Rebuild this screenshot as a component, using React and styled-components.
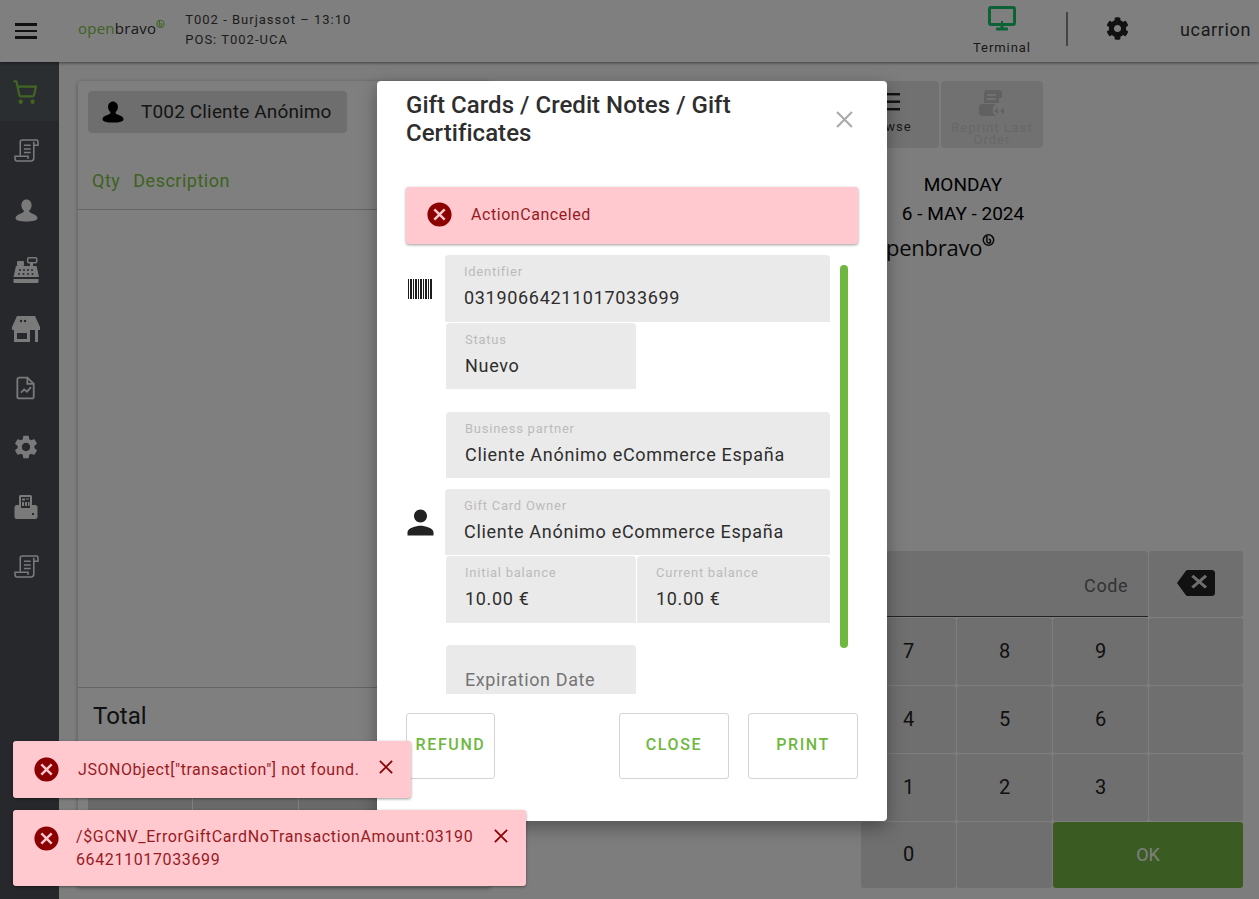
import React from 'react';
import styled, { createGlobalStyle } from 'styled-components';
import { FaCog } from 'react-icons/fa';
import { ShoppingCart } from 'lucide-react';

const Global = createGlobalStyle`
  html, body { margin: 0; padding: 0; height: 100%; overflow: hidden; }
  body { font-family: Roboto, "Liberation Sans", sans-serif; color: #222; }
  * { box-sizing: border-box; }
`;

const Page = styled.div`
  width: 1259px; height: 899px; position: relative; overflow: hidden;
  background: #fafafa; display: flex; flex-direction: column;
`;
const TopBar = styled.header`
  height: 62px; flex: none; background: #fff; display: flex; align-items: center;
  box-shadow: 0 1px 3px rgba(0,0,0,.5); position: relative; z-index: 1;
`;
const Burger = styled.div`
  width: 22px; margin-left: 15px; margin-right: 41px; display: flex; flex-direction: column; gap: 4px;
  span { display: block; height: 2.4px; background: #222; }
`;
const LogoBox = styled.div`
  display: inline-flex; align-items: flex-start; font-family: "Open Sans", sans-serif;
  font-size: ${p => p.$size}px; line-height: 1; letter-spacing: ${p => p.$track}px; font-weight: 400;
  margin-top: ${p => p.$top || 0}px;
  svg { margin-top: ${p => p.$ring}px; }
`;
const LogoPart = styled.span`color: ${p => p.$color};`;
const StoreInfo = styled.div`
  margin-left: 20px; margin-top: -2px; font-size: 13px; line-height: 20px; letter-spacing: 1px; color: #3a3a3a;
`;
const TopRight = styled.div`
  margin-left: auto; display: flex; align-items: center; height: 100%;
`;
const Terminal = styled.div`
  width: 66px; display: flex; flex-direction: column; align-items: center; font-size: 13px;
  letter-spacing: .95px; color: #333; margin-top: 3px; line-height: 16px; margin-left: -1px;
  svg { margin-bottom: 9px; margin-top: -4px; }
`;
const Divider = styled.div`
  width: 2px; height: 34px; background: #888; margin: 0 37px 0 31px; margin-top: -4px;
`;
const UserName = styled.div`
  font-size: 18px; letter-spacing: .65px; color: #333; margin-left: 51px; margin-right: 8px; margin-top: -4px; width: 71px; white-space: nowrap;
`;
const GearBtn = styled.div`display: flex; margin-top: -6px; margin-left: 1px; color: #222;`;

const Body = styled.div`flex: 1; display: flex; min-height: 0;`;
const Sidebar = styled.nav`
  width: 59px; flex: none; background: #4c5158; display: flex; flex-direction: column;
`;
const NavItem = styled.div`
  height: 59.3px; display: flex; align-items: center; justify-content: center; padding-right: ${p => (p.$active ? 9 : 7)}px;
  background: ${p => (p.$active ? '#575c63' : 'transparent')};
  color: ${p => (p.$active ? '#85cc45' : '#f5f5f5')};
`;
const Main = styled.main`
  flex: 1; display: flex; padding: 19px 16px 12px 19px; min-width: 0;
`;
const OrderPanel = styled.section`
  width: 412px; flex: none; background: #fff; border-radius: 3px; display: flex; flex-direction: column;
  box-shadow: 0 1px 4px rgba(0,0,0,.35);
`;
const Customer = styled.div`
  margin: 10px 0 0 10px; width: 259px; height: 42px; background: #dcdcdc; border-radius: 4px;
  display: flex; align-items: center; padding: 0 0 1px 13px; gap: 16px; font-size: 19px; letter-spacing: .15px; color: #2a2a2a;
`;
const OrderHead = styled.div`
  height: 77px; flex: none; border-bottom: 1px solid #c8c8c8; display: flex; align-items: flex-end; gap: 13px;
  padding: 0 0 18px 14px; font-size: 18px; color: #7cc544; letter-spacing: .5px;
`;
const OrderLines = styled.div`flex: 1;`;
const TotalRow = styled.div`
  height: 108px; flex: none; border-top: 1px solid #c8c8c8; padding: 14px 15px; font-size: 24px; color: #222;
`;
const OrderKeys = styled.div`
  display: grid; grid-template-columns: 104px 105px 105px 1fr; gap: 1px; padding: 0 10px; height: 90px; margin-bottom: 2px; flex: none;
`;
const OrderKey = styled.div`background: #d2d2d2;`;

const Side = styled.section`flex: 1; display: flex; flex-direction: column; min-width: 0;`;
const Toolbar = styled.div`display: flex; justify-content: flex-end; gap: 2px; margin-right: 200px;`;
const ToolBtn = styled.div`
  width: ${p => p.$w}px; height: 67px; background: #e3e3e3; border-radius: 4px; display: flex;
  flex-direction: column; align-items: center; font-size: 13px; letter-spacing: 1px; text-align: center;
  line-height: 12px; padding-top: ${p => p.$pad}px;
  color: ${p => (p.$off ? '#cfcfcf' : '#333')};
  svg { margin-bottom: ${p => p.$gap}px; }
`;
const DateBlock = styled.div`
  margin: 22px 0 0 371px; width: 204px; text-align: center; font-size: 19px; line-height: 29px; color: #000;
`;
const InfoLogo = styled.div`margin: 0 0 0 383px;`;
const Keypad = styled.div`
  margin-top: auto; align-self: flex-end; width: 382px; height: 336px; display: grid;
  grid-template-columns: 95px 95px 95px 94px; grid-template-rows: 66px 67px 67px 67px 66px; gap: 1px;
`;
const CodeCell = styled.div`
  grid-column: span 3; background: #dfdfdf; border-bottom: 1px solid #444; border-radius: 4px 4px 0 0;
  display: flex; align-items: center; justify-content: flex-end; padding: 3px 20px 0 0; font-size: 18px; color: #666; letter-spacing: .55px;
`;
const Key = styled.div`
  grid-column: span ${p => p.$span || 1}; background: ${p => (p.$ok ? '#74b844' : '#dfdfdf')};
  border-radius: 3px; display: flex; align-items: center; justify-content: center; font-size: 20px;
  color: ${p => (p.$ok ? '#fff' : '#222')}; padding-bottom: 2px;
  ${p => p.$ok && 'font-size: 18px;'}
`;
const Overlay = styled.div`position: absolute; inset: 0; background: rgba(0,0,0,.5); z-index: 2;`;

const Modal = styled.div`
  position: absolute; left: 377px; top: 81px; width: 510px; height: 740px; z-index: 3; background: #fff;
  border-radius: 4px; padding: 10px 29px 0; display: flex; flex-direction: column;
  box-shadow: 0 6px 18px rgba(0,0,0,.35);
`;
const ModalHead = styled.div`display: flex; align-items: center; justify-content: space-between;`;
const ModalTitle = styled.h2`
  margin: 0; width: 350px; font-size: 24px; line-height: 28px; font-weight: 500; color: #2e2e2e; letter-spacing: .04px;
`;
const ModalClose = styled.div`display: flex; margin-right: 5px; color: #aaa;`;
const AlertBox = styled.div`
  margin-top: 40px; height: 57px; flex: none; background: #ffc9cf; border-radius: 3px;
  display: flex; align-items: center; padding: 0 0 2px 21px; gap: 20px; font-size: 16px; color: #981a1f; letter-spacing: .55px;
  box-shadow: 0 1px 3px rgba(0,0,0,.4);
`;
const FormScroll = styled.div`
  margin-top: 11px; height: 439px; flex: none; overflow: hidden; position: relative;
`;
const Scrollbar = styled.div`
  position: absolute; right: 10px; top: 10px; width: 8px; height: 383px; border-radius: 4px; background: #6fb83f;
`;
const FieldRow = styled.div`
  width: 424px; display: flex; align-items: center; margin-top: ${p => p.$mt || 0}px;
`;
const RowIcon = styled.div`width: 39px; flex: none; display: flex; color: #222; padding-left: 2px;`;
const FieldPair = styled.div`
  flex: 1; display: flex; gap: 1px; margin-left: ${p => (p.$inset ? 1 : 0)}px;
`;
const Field = styled.div`
  width: ${p => (p.$w ? `${p.$w}px` : 'auto')}; flex: ${p => (p.$w ? 'none' : 1)}; height: ${p => p.$h || 66}px;
  background: #eaeaea; border-radius: 4px 4px 0 0; padding: 9px 19px 0;
`;
const FieldLabel = styled.div`font-size: 13px; line-height: 16px; color: #bbb; letter-spacing: .75px;`;
const FieldValue = styled.div`
  font-size: 18px; line-height: 24px; margin-top: 6px; color: #2e2e2e; white-space: nowrap; letter-spacing: .69px;
`;
const FieldHint = styled.div`font-size: 18px; line-height: 24px; margin-top: 14px; color: #757575; letter-spacing: .6px;`;
const ModalFoot = styled.div`margin-top: 19px; display: flex; gap: 19px;`;
const FootBtn = styled.div`
  width: ${p => p.$w}px; height: 66px; margin-right: ${p => p.$mr || 0}px; border: 1px solid #d4d4d4; border-radius: 3px;
  display: flex; align-items: center; justify-content: center; font-size: 16px; font-weight: 500;
  letter-spacing: 1.6px; color: #6fb83f; padding-bottom: 4px;
`;
const ToastStack = styled.div`
  position: absolute; left: 13px; bottom: 13px; z-index: 4; display: flex; flex-direction: column; align-items: flex-start; gap: 12px;
`;
const Toast = styled.div`
  width: ${p => p.$w}px; min-height: 57px; background: #ffc9cf; border-radius: 3px; display: flex; align-items: flex-start;
  font-size: 16px; line-height: 23px; color: #981a1f; letter-spacing: ${p => p.$track}px; padding: ${p => p.$pad}px 0 0 21px;
  box-shadow: 0 1px 3px rgba(0,0,0,.4); position: relative;
`;
const ToastIcon = styled.div`display: flex; flex: none; margin-right: ${p => p.$gap}px; margin-top: ${p => p.$top}px;`;
const ToastText = styled.div`width: ${p => p.$w}px; word-break: break-all; padding-bottom: 15px;`;
const ToastClose = styled.div`display: flex; position: absolute; color: #8b0000; right: ${p => p.$r}px; top: ${p => p.$t}px;`;

const CANCEL = 'M12 2C6.47 2 2 6.47 2 12s4.47 10 10 10 10-4.47 10-10S17.53 2 12 2zm5 13.59L15.59 17 12 13.41 8.41 17 7 15.59 10.59 12 7 8.41 8.41 7 12 10.59 15.59 7 17 8.41 13.41 12 17 15.59z';
const ErrorIcon = () => (
  <svg width="29" height="29" viewBox="0 0 24 24" style={{ margin: '-2.5px' }}><path fill="#8b0000" d={CANCEL} /></svg>
);
const CloseX = ({ size, color = 'currentColor', w = 2 }) => (
  <svg width={size} height={size} viewBox="0 0 16 16"><path d="M1 1l14 14M15 1L1 15" stroke={color} strokeWidth={w} fill="none" /></svg>
);
const Bust = ({ size, color }) => (
  <svg width={size} height={size} viewBox="0 0 24 24" fill={color}>
    <path d="M12 1.500c2.800 0 4.900 2.300 4.900 5.400 0 2.100-.9 3.900-2.300 5V13c0 .9 1.200 1.300 3.100 2 2.400.9 4.800 1.900 4.800 4.400 0 2.100-4.800 3.100-10.500 3.100S1.500 21.500 1.500 19.400c0-2.500 2.400-3.500 4.800-4.400 1.900-.7 3.100-1.100 3.100-2v-1.100c-1.400-1.100-2.300-2.900-2.300-5 0-3.100 2.100-5.400 4.900-5.400z" />
  </svg>
);
const Scroll = ({ size = 25, color = 'currentColor' }) => (
  <svg width={size} height={size} viewBox="0 0 24 24" fill="none" stroke={color} strokeWidth="1.500">
    <path d="M6 17V4a2 2 0 0 1 2-2h13.500a1.500 1.500 0 0 1 1.500 1.500V7h-4" />
    <path d="M19 3.500V19.500a2.500 2.500 0 0 1-2.500 2.500H3a2 2 0 0 1-2-2v-2.500h12.500v2.500" />
    <path d="M9.500 7h6.500M9.500 10.500h6.500M9.500 14h6.500" />
  </svg>
);
const Register = () => (
  <svg width="28" height="28" viewBox="0 0 28 28" fill="currentColor">
    <rect x="15.700" y="1.700" width="9" height="5" rx="1" fill="none" stroke="currentColor" strokeWidth="1.500" />
    <rect x="18" y="6" width="3" height="4" />
    <rect x="5" y="5" width="7" height="5" rx="1" />
    <path d="M4 10h20.500l2.500 11H1.500z" />
    <g fill="#4c5158"><circle cx="8" cy="14" r="1" /><circle cx="12" cy="14" r="1" /><circle cx="16" cy="14" r="1" /><circle cx="20" cy="14" r="1" /><circle cx="7" cy="18" r="1" /><circle cx="11.500" cy="18" r="1" /><circle cx="16" cy="18" r="1" /><circle cx="20.500" cy="18" r="1" /></g>
    <path d="M1.500 23h25v3a1 1 0 0 1-1 1h-23a1 1 0 0 1-1-1z" />
  </svg>
);
const Store = () => (
  <svg width="28" height="26" viewBox="0 0 28 26" fill="currentColor">
    <path d="M5 0h18l5 11v3H0v-3z" />
    <circle cx="9" cy="5" r="1.200" fill="#4c5158" /><circle cx="13" cy="5" r="1.200" fill="#4c5158" />
    <path fillRule="evenodd" d="M2 14h16v12H2zM5 17v6h10v-6z" />
    <rect x="23" y="14" width="3" height="12" />
  </svg>
);
const DocChart = () => (
  <svg width="20" height="24" viewBox="0 0 22 26" fill="none" stroke="currentColor" strokeWidth="2">
    <path d="M3.500 1.500h9l7 7v14a2 2 0 0 1-2 2h-14a2 2 0 0 1-2-2v-19a2 2 0 0 1 2-2z" />
    <path d="M12.500 1.500v7h7" />
    <path d="M5.500 18l3.500-3.500 3 2.500 4.500-5" strokeWidth="2" />
  </svg>
);
const Gear = () => (
  <svg width="28" height="28" viewBox="0 0 24 24" fill="currentColor">
    <path d="M19.140,12.940c0.040-0.300,0.060-0.610,0.060-0.940c0-0.320-0.020-0.640-0.070-0.940l2.030-1.580c0.180-0.140,0.230-0.410,0.120-0.610l-1.920-3.320c-0.120-0.220-0.370-0.290-0.590-0.220l-2.390,0.960c-0.500-0.380-1.030-0.700-1.620-0.940L14.400,2.810c-0.040-0.240-0.240-0.410-0.480-0.410h-3.840c-0.240,0-0.430,0.170-0.470,0.410L9.250,5.350C8.660,5.590,8.120,5.920,7.630,6.290L5.240,5.330c-0.220-0.080-0.470,0-0.590,0.220L2.740,8.870C2.620,9.080,2.660,9.340,2.860,9.480l2.030,1.580C4.840,11.360,4.800,11.690,4.800,12s0.020,0.640,0.070,0.940l-2.030,1.580c-0.180,0.140-0.230,0.410-0.120,0.610l1.920,3.320c0.120,0.220,0.370,0.290,0.590,0.220l2.390-0.960c0.500,0.380,1.030,0.700,1.620,0.940l0.360,2.540c0.050,0.240,0.240,0.410,0.480,0.410h3.840c0.240,0,0.440-0.170,0.470-0.410l0.360-2.540c0.590-0.240,1.130-0.560,1.620-0.940l2.390,0.960c0.220,0.080,0.470,0,0.590-0.220l1.920-3.320c0.120-0.220,0.070-0.470-0.120-0.610L19.140,12.940z M12,15.600c-1.980,0-3.600-1.620-3.600-3.600s1.620-3.600,3.600-3.600s3.600,1.620,3.600,3.600S13.980,15.600,12,15.600z" />
  </svg>
);
const PosMachine = () => (
  <svg width="24" height="24" viewBox="0 0 24 24" fill="currentColor">
    <path fillRule="evenodd" d="M6.500 0h10A1.500 1.500 0 0 1 18 1.500V10h3a2.500 2.500 0 0 1 2.500 2.500v9A2.500 2.500 0 0 1 21 24H3a2.500 2.500 0 0 1-2.500-2.500v-9A2.500 2.500 0 0 1 3 10h2V1.500A1.500 1.500 0 0 1 6.500 0zM7 2v11h9V2z" />
    <g><rect x="8" y="3.500" width="3" height="2" /><rect x="12" y="3.500" width="3" height="1" /><rect x="8" y="7" width="2" height="4" /><rect x="11" y="7" width="2" height="4" /><rect x="14" y="7" width="1.500" height="4" /></g>
    <rect x="18" y="18" width="2" height="2" fill="#4c5158" />
  </svg>
);
const Spiral = ({ size, color }) => (
  <svg width={size} height={size} viewBox="0 0 12 12" fill="none" stroke={color} strokeWidth="1.400">
    <circle cx="6" cy="6.500" r="4.800" />
    <path d="M4.500 2.500v5a1.700 1.700 0 1 0 1.700-1.700" />
  </svg>
);
const Logo = ({ size, track, first, second, ring, ringSize, ringTop, top }) => (
  <LogoBox $size={size} $track={track} $ring={ringTop} $top={top}>
    <LogoPart $color={first}>open</LogoPart>
    <LogoPart $color={second}>bravo</LogoPart>
    <Spiral size={ringSize} color={ring} />
  </LogoBox>
);
const Monitor = () => (
  <svg width="28" height="25" viewBox="0 0 28 25" fill="none">
    <rect x="1.500" y="1.500" width="25" height="17" rx="1.500" stroke="#16c46a" strokeWidth="3" />
    <rect x="12.500" y="18" width="3" height="4" fill="#16c46a" />
    <rect x="8" y="21.500" width="12" height="3" rx="1" fill="#16c46a" />
    <rect x="13" y="15" width="2" height="2" fill="#16c46a" />
  </svg>
);
const Barcode = () => (
  <svg width="24" height="20" viewBox="0 0 24 20" fill="#1c1c1c">
    {[[0,1],[2,2],[5,1],[7,2],[10,1],[12,2],[15,1],[17,2],[20,1],[22,2]].map(([x, w]) => <rect key={x} x={x} y="0" width={w} height="20" />)}
  </svg>
);
const MuiPerson = () => (
  <svg width="39" height="39" viewBox="0 0 24 24" style={{ margin: '-6.5px -6.5px -6.5px -7.5px' }} fill="#222">
    <path d="M12 12c2.210 0 4-1.790 4-4s-1.790-4-4-4-4 1.790-4 4 1.790 4 4 4zm0 2c-2.670 0-8 1.340-8 4v2h16v-2c0-2.660-5.330-4-8-4z" />
  </svg>
);
const BrowseIcon = () => (
  <svg width="26" height="18" viewBox="0 0 26 18" fill="#222"><rect x="4" width="22" height="2.400" /><rect x="8" y="7.500" width="18" height="2.400" /><rect x="4" y="15" width="22" height="2.400" /></svg>
);
const ReprintIcon = () => (
  <svg width="26" height="27" viewBox="0 0 26 27" fill="#c2c2c2">
    <path fillRule="evenodd" d="M5 3a3 3 0 0 1 3-3h12a3 3 0 0 1 3 3v5h-3v5H5zM8 4v2h9V4zM8 8v2h9V8z" />
    <path d="M3 14h14a7 7 0 0 0 0 12H3a3 3 0 0 1-3-3v-6a3 3 0 0 1 3-3z" />
    <path d="M19 18v6l-4-3zM25 18v6l-4-3z" />
  </svg>
);
const BackspaceIcon = () => (
  <svg width="38" height="26" viewBox="0 0 24 19" preserveAspectRatio="none" fill="#222">
    <path d="M22 0H7C6.310 0 5.770.35 5.410.88L0 9.500l5.410 8.610c.36.53.9.89 1.590.89h15c1.100 0 2-.9 2-2V2c0-1.100-.9-2-2-2zm-3 12.090L17.590 13.500 14 9.910 10.410 13.500 9 12.090 12.590 8.500 9 4.910 10.410 3.500 14 7.090 17.590 3.500 19 4.910 15.410 8.500z" />
  </svg>
);

const keys = ['7', '8', '9', '', '4', '5', '6', '', '1', '2', '3', ''];

export default function App() {
  return (
    <Page>
      <Global />
      <TopBar>
        <Burger><span /><span /><span /></Burger>
        <Logo size={15} track={0.25} first="#7cc544" second="#333" ring="#7cc544" ringSize={9} ringTop={-2} top={-5} />
        <StoreInfo>
          <div>T002 - Burjassot – 13:10</div>
          <div>POS: T002-UCA</div>
        </StoreInfo>
        <TopRight>
          <Terminal><Monitor />Terminal</Terminal>
          <Divider />
          <GearBtn><FaCog size={23} /></GearBtn>
          <UserName>ucarrion</UserName>
        </TopRight>
      </TopBar>
      <Body>
        <Sidebar>
          <NavItem $active><ShoppingCart size={26} strokeWidth={2} /></NavItem>
          <NavItem><Scroll /></NavItem>
          <NavItem><Bust size={25} color="currentColor" /></NavItem>
          <NavItem><Register /></NavItem>
          <NavItem><Store /></NavItem>
          <NavItem><DocChart /></NavItem>
          <NavItem><Gear /></NavItem>
          <NavItem><PosMachine /></NavItem>
          <NavItem><Scroll /></NavItem>
        </Sidebar>
        <Main>
          <OrderPanel>
            <Customer><Bust size={24} color="#000" />T002 Cliente Anónimo</Customer>
            <OrderHead><span>Qty</span><span>Description</span></OrderHead>
            <OrderLines />
            <TotalRow>Total</TotalRow>
            <OrderKeys><OrderKey /><OrderKey /><OrderKey /><OrderKey /></OrderKeys>
          </OrderPanel>
          <Side>
            <Toolbar>
              <ToolBtn $w={104} $pad={12} $gap={10}><BrowseIcon />Browse</ToolBtn>
              <ToolBtn $w={102} $off $pad={9} $gap={5}><ReprintIcon />Reprint Last Order</ToolBtn>
            </Toolbar>
            <DateBlock><div>MONDAY</div><div>6 - MAY - 2024</div></DateBlock>
            <InfoLogo><Logo size={22} track={-0.25} first="#111" second="#111" ring="#111" ringSize={13} ringTop={-3} top={8} /></InfoLogo>
            <Keypad>
              <CodeCell>Code</CodeCell>
              <Key><BackspaceIcon /></Key>
              {keys.map((k, i) => <Key key={i}>{k}</Key>)}
              <Key>0</Key>
              <Key />
              <Key $span={2} $ok>OK</Key>
            </Keypad>
          </Side>
        </Main>
      </Body>
      <Overlay />
      <Modal>
        <ModalHead>
          <ModalTitle>Gift Cards / Credit Notes / Gift Certificates</ModalTitle>
          <ModalClose><CloseX size={17} /></ModalClose>
        </ModalHead>
        <AlertBox><ErrorIcon />ActionCanceled</AlertBox>
        <FormScroll>
          <FieldRow>
            <RowIcon><Barcode /></RowIcon>
            <FieldPair><Field $h={67}><FieldLabel>Identifier</FieldLabel><FieldValue>03190664211017033699</FieldValue></Field></FieldPair>
          </FieldRow>
          <FieldRow $mt={1}>
            <RowIcon />
            <FieldPair $inset><Field $w={190}><FieldLabel>Status</FieldLabel><FieldValue>Nuevo</FieldValue></Field></FieldPair>
          </FieldRow>
          <FieldRow $mt={23}>
            <RowIcon />
            <FieldPair $inset><Field><FieldLabel>Business partner</FieldLabel><FieldValue>Cliente Anónimo eCommerce España</FieldValue></Field></FieldPair>
          </FieldRow>
          <FieldRow $mt={11}>
            <RowIcon><MuiPerson /></RowIcon>
            <FieldPair><Field><FieldLabel>Gift Card Owner</FieldLabel><FieldValue>Cliente Anónimo eCommerce España</FieldValue></Field></FieldPair>
          </FieldRow>
          <FieldRow $mt={1}>
            <RowIcon />
            <FieldPair $inset>
              <Field $w={190} $h={67}><FieldLabel>Initial balance</FieldLabel><FieldValue>10.00 €</FieldValue></Field>
              <Field $h={67}><FieldLabel>Current balance</FieldLabel><FieldValue>10.00 €</FieldValue></Field>
            </FieldPair>
          </FieldRow>
          <FieldRow $mt={22}>
            <RowIcon />
            <FieldPair $inset><Field $w={190}><FieldHint>Expiration Date</FieldHint></Field></FieldPair>
          </FieldRow>
          <Scrollbar />
        </FormScroll>
        <ModalFoot>
          <FootBtn $w={89} $mr={105}>REFUND</FootBtn>
          <FootBtn $w={110}>CLOSE</FootBtn>
          <FootBtn $w={110}>PRINT</FootBtn>
        </ModalFoot>
      </Modal>
      <ToastStack>
        <Toast $w={398} $pad={17} $track={0.55}>
          <ToastIcon $gap={20} $top={-1}><ErrorIcon /></ToastIcon>
          <ToastText $w={290}>JSONObject["transaction"] not found.</ToastText>
          <ToastClose $r={18} $t={19}><CloseX size={14} /></ToastClose>
        </Toast>
        <Toast $w={513} $pad={15} $track={0.63}>
          <ToastIcon $gap={18} $top={1}><ErrorIcon /></ToastIcon>
          <ToastText $w={404}>/$GCNV_ErrorGiftCardNoTransactionAmount:03190664211017033699</ToastText>
          <ToastClose $r={18} $t={19}><CloseX size={14} /></ToastClose>
        </Toast>
      </ToastStack>
    </Page>
  );
}
